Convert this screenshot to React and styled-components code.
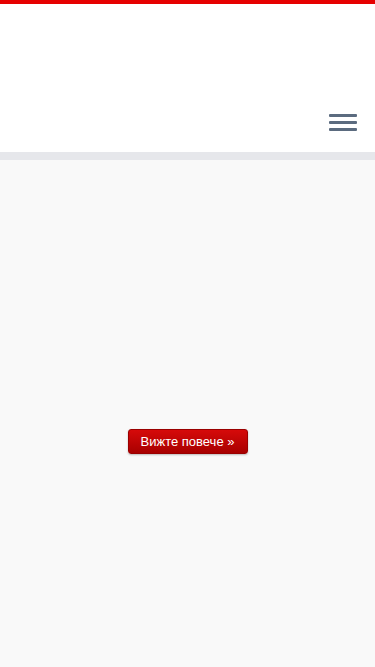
import React from 'react'
import styled, { createGlobalStyle } from 'styled-components'

const GlobalStyle = createGlobalStyle`
  html, body {
    margin: 0;
    padding: 0;
    background: #f9f9f9;
    font-family: 'Liberation Sans', Arial, sans-serif;
  }
`

const Page = styled.div`
  min-height: 667px;
  display: flex;
  flex-direction: column;
  background: #f9f9f9;
`

const Header = styled.header`
  height: 160px;
  box-sizing: border-box;
  border-top: 4px solid #e60000;
  border-bottom: 8px solid #e6e7eb;
  background: #ffffff;
  display: flex;
  justify-content: flex-end;
  align-items: flex-end;
  padding: 0 18px 21px 0;
`

const MenuButton = styled.button`
  width: 28px;
  padding: 0;
  border: 0;
  background: none;
  display: flex;
  flex-direction: column;
  gap: 4px;
  cursor: pointer;
`

const Bar = styled.span`
  display: block;
  height: 3px;
  border-radius: 1px;
  background: #5b6b7f;
`

const Main = styled.main`
  display: flex;
  justify-content: center;
  padding-top: 269px;
`

const MoreButton = styled.a`
  display: inline-flex;
  align-items: center;
  justify-content: center;
  width: 120px;
  height: 25px;
  box-sizing: border-box;
  border-radius: 3px;
  border: 1px solid #9a0000;
  background: linear-gradient(to bottom, #d60a0a 0%, #a80000 100%);
  box-shadow: 0 1px 2px rgba(0, 0, 0, 0.25);
  color: #ffffff;
  font-size: 13px;
  text-decoration: none;
  cursor: pointer;
`

const App = () => {
  return (
    <>
      <GlobalStyle />
      <Page>
        <Header>
          <MenuButton aria-label="Меню">
            <Bar />
            <Bar />
            <Bar />
          </MenuButton>
        </Header>
        <Main>
          <MoreButton href="#">Вижте повече »</MoreButton>
        </Main>
      </Page>
    </>
  )
}

export default App
